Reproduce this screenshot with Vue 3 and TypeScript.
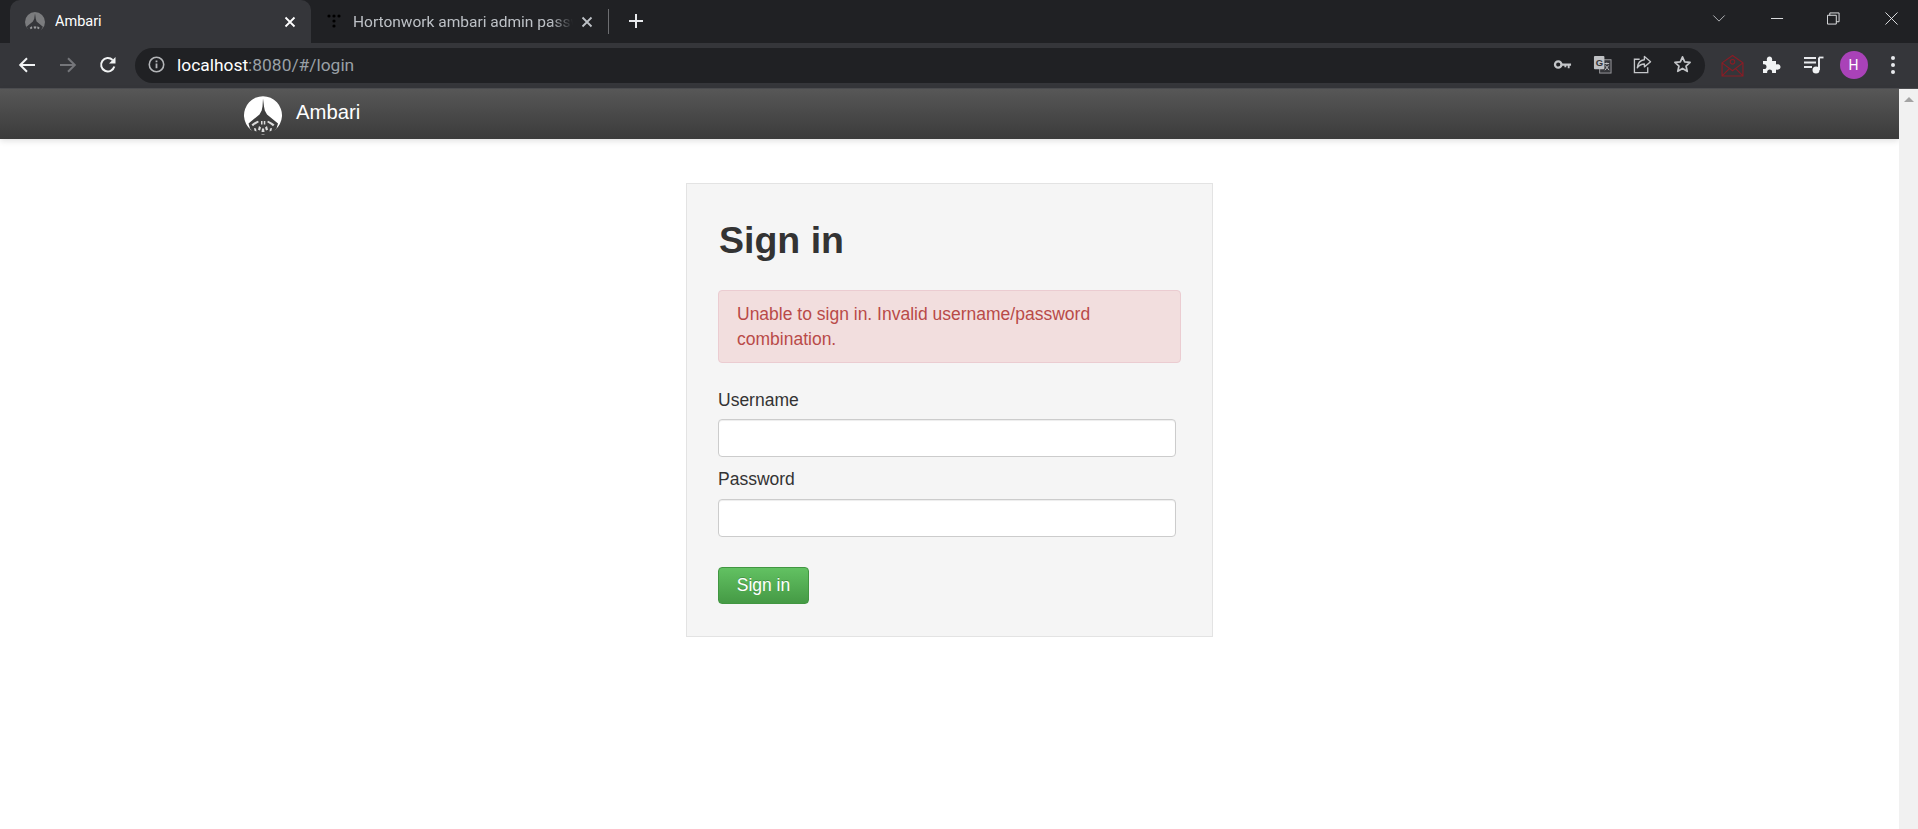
<script setup lang="ts">
import { ref } from 'vue'
const username = ref('')
const password = ref('')
</script>

<template>
  <div class="window">
    <header class="tabstrip">
      <div class="tab active">
        <svg class="favicon" viewBox="0 0 38 38">
          <circle cx="19" cy="19" r="19" fill="#7b7c7e" />
          <path d="M19 3l1.500 10 1.500 5 12 10-4 7-5 3H13l-6-3-4-7 12-10 2.500-5z" fill="#35363a" />
          <path d="M9 30l4-3 1 4-3 2zM16 28l3-1 3 1-2 4h-2zM24 27l4 3-2 3-3-2z" fill="#9a9b9d" />
        </svg>
        <span class="tab-title">Ambari</span>
        <svg class="tab-close" viewBox="0 0 12 12"><path d="M1.500 1.500l9 9M10.500 1.500l-9 9" stroke="#fff" stroke-width="1.800" /></svg>
      </div>
      <div class="tab inactive">
        <svg class="favicon small" viewBox="0 0 16 16" fill="#000">
          <circle cx="2" cy="2" r="1.600" /><circle cx="7" cy="2" r="1.600" /><circle cx="12" cy="2" r="1.600" />
          <circle cx="7" cy="7" r="1.600" /><circle cx="7" cy="12" r="1.600" />
        </svg>
        <span class="tab-title faded">Hortonwork ambari admin password</span>
        <svg class="tab-close" viewBox="0 0 12 12"><path d="M1.500 1.500l9 9M10.500 1.500l-9 9" stroke="#bdc1c6" stroke-width="1.800" /></svg>
      </div>
      <span class="tab-sep"></span>
      <svg class="newtab" viewBox="0 0 16 16"><path d="M8 1v14M1 8h14" stroke="#e8eaed" stroke-width="2" /></svg>
      <div class="window-controls">
        <svg viewBox="0 0 16 10" class="chev"><path d="M1.500 1.500L8 8l6.500-6.500" fill="none" stroke="#c4c6c9" stroke-width="1" /></svg>
        <svg viewBox="0 0 14 14" class="ctl"><path d="M0 7h13" stroke="#e8eaed" stroke-width="1" /></svg>
        <svg viewBox="0 0 14 14" class="ctl"><path d="M.5 3.500h9.500v9.500H.5zM3 3.500V1h10v9.500h-3" fill="none" stroke="#e8eaed" stroke-width="1" /></svg>
        <svg viewBox="0 0 14 14" class="ctl"><path d="M.5.500l13 13M13.500.500l-13 13" stroke="#e8eaed" stroke-width="1" /></svg>
      </div>
    </header>

    <div class="toolbar">
      <button class="nav-btn" aria-label="Back">
        <svg viewBox="0 0 18 18"><path d="M17 9H2.500M9 2.200L2.200 9 9 15.800" fill="none" stroke="#f1f3f4" stroke-width="2" /></svg>
      </button>
      <button class="nav-btn" aria-label="Forward">
        <svg viewBox="0 0 18 18"><path d="M1 9h14.500M9 2.200L15.800 9 9 15.800" fill="none" stroke="#75767a" stroke-width="2" /></svg>
      </button>
      <button class="nav-btn" aria-label="Reload">
        <svg viewBox="0 0 18 18"><path d="M15.300 10.500A6.700 6.700 0 1 1 13.600 4" fill="none" stroke="#f1f3f4" stroke-width="2" /><path d="M16.500 1v6.500H10z" fill="#f1f3f4" /></svg>
      </button>
      <div class="omnibox">
        <svg class="info" viewBox="0 0 16 16"><circle cx="8" cy="8" r="6.800" fill="none" stroke="#b4b6b9" stroke-width="1.500" /><path d="M8 7v4.500M8 4.200v1.600" stroke="#b4b6b9" stroke-width="1.700" /></svg>
        <span class="url"><span class="host">localhost</span>:8080/#/login</span>
        <div class="omni-icons">
          <svg viewBox="0 0 20 20"><circle cx="5.500" cy="10" r="3.400" fill="none" stroke="#c4c6c9" stroke-width="2.400" /><path d="M9 9h10v2.200h-1.500V14h-2v-2.800h-1.500V13h-2v-1.800H9z" fill="#c4c6c9" /></svg>
          <svg viewBox="0 0 20 20"><rect x="7" y="5" width="12" height="14" fill="#35363a" stroke="#9a9b9e" stroke-width="1" /><rect x="1" y="1" width="11" height="14" rx="1" fill="#bfc1c4" /><text x="3" y="12" class="glyph-g">G</text><path d="M12 9h5M14.500 8v2M12.500 16l4-5M13 11l4 5" stroke="#c4c6c9" stroke-width="1" fill="none" /></svg>
          <svg viewBox="0 0 20 20"><path d="M7 4.500H1.500V18.500H15.500V13" fill="none" stroke="#c4c6c9" stroke-width="1.400" /><path d="M12 1.500L18.500 7 12 12.500V9.500c-3.500 0-5.500 1-7.500 4 .5-5 3-8 7.500-8.500z" fill="none" stroke="#c4c6c9" stroke-width="1.400" stroke-linejoin="round" /></svg>
          <svg viewBox="0 0 20 20"><path d="M10 2l2.300 5.300 5.700.500-4.300 3.800 1.300 5.600L10 14.200 5 17.200l1.300-5.600L2 7.800l5.700-.500z" fill="none" stroke="#c4c6c9" stroke-width="1.800" stroke-linejoin="round" /></svg>
        </div>
      </div>
      <div class="ext-icons">
        <svg class="mail" viewBox="0 0 22 22"><path d="M1 8.500L11 1.500l10 7V21H1zM1 8.500l10 7.500 10-7.500M1 21l7.500-7.500M21 21l-7.500-7.500" fill="none" stroke="#8a1c25" stroke-width="1.100" /><circle cx="11" cy="7.500" r="2.200" fill="none" stroke="#8a1c25" stroke-width="1" /></svg>
        <svg viewBox="0 0 20 20"><path d="M2 6h4c-.8-3 .8-4.500 2.500-4.500S11.800 3 11 6h4v3.500c3-.8 4.500.8 4.500 2.500S18 15.300 15 14.500V18h-4c.5-2.500-.8-3.500-2.300-3.500S5.800 15.500 6.200 18H2v-4c2.500.5 3.500-.8 3.500-2.300S4.500 8.800 2 9.300z" fill="#f1f3f4" /></svg>
        <svg viewBox="0 0 20 20"><path d="M0 3h12M0 7.500h12M0 12h8" stroke="#e8eaed" stroke-width="1.800" /><path d="M15 2.500V15" stroke="#e8eaed" stroke-width="2" /><path d="M15 2.500h4.500" stroke="#e8eaed" stroke-width="1.800" /><circle cx="12" cy="15" r="3.500" fill="#f1f3f4" /></svg>
        <div class="avatar">H</div>
        <svg class="dots" viewBox="0 0 6 20" fill="#e8eaed"><circle cx="3" cy="3" r="2" /><circle cx="3" cy="10" r="2" /><circle cx="3" cy="17" r="2" /></svg>
      </div>
    </div>

    <div class="viewport">
      <main class="page">
        <nav class="navbar">
          <svg class="logo" viewBox="0 0 38 39">
            <path d="M7 34A19 19 0 1 1 31 34L19 39z" fill="#fff" />
            <path d="M19 2.500l1 8 .8 4 2.200 4 11 9-1.500 5-3.500 4-5 2H14.500l-5-2-3.500-4-1.500-5 11-9 2.200-4 .8-4z" fill="#3e3e3e" />
            <path d="M7.500 28.500c2.500-2 4.500-3 6.500-3.800l.8 1.500c-2 1-3.800 2.300-5.800 4zM30.500 28.500c-2.500-2-4.500-3-6.500-3.800l-.8 1.500c2 1 3.800 2.300 5.800 4zM17 25h1.500v3.500H17zM19.800 25h1.500v3.500h-1.500zM15 30l2 1.500-1 3-2-.8zM23 30l-2 1.500 1 3 2-.8zM18 32.500h2l.5 3.500h-3zM10 32l2 .5.500 3-2-.8zM28 32l-2 .5-.5 3 2-.8z" fill="#dcdcdc" />
          </svg>
          <span class="brand">Ambari</span>
        </nav>
        <section class="card">
          <h2 class="title">Sign in</h2>
          <div class="alert">Unable to sign in. Invalid username/password combination.</div>
          <form class="form" @submit.prevent>
            <label class="label" for="username">Username</label>
            <input id="username" v-model="username" class="input" type="text" />
            <label class="label second" for="password">Password</label>
            <input id="password" v-model="password" class="input" type="password" />
            <button class="submit" type="submit">Sign in</button>
          </form>
        </section>
      </main>
      <aside class="scrollbar"><span class="arrow"></span></aside>
    </div>
  </div>
</template>

<style>
html, body { margin: 0; overflow: hidden; background: #fff; }
</style>

<style scoped>
.window { width: 1918px; height: 829px; display: flex; flex-direction: column; overflow: hidden; font-family: "Liberation Sans", Arial, sans-serif; }

.tabstrip { height: 43px; flex: none; background: #202124; display: flex; align-items: stretch; padding-left: 10px; box-sizing: border-box; }
.tab { height: 43px; display: flex; align-items: center; box-sizing: border-box; font-family: Roboto, sans-serif; font-size: 14.500px; }
.active { width: 301px; background: #35363a; border-radius: 10px 10px 0 0; padding: 0 15px 0 15px; color: #fff; }
.inactive { width: 297px; padding: 0 15px 0 16px; color: #bdc1c6; font-size: 15.500px; }
.favicon { width: 20px; height: 20px; flex: none; margin-right: 10px; }
.favicon.small { width: 16px; height: 16px; margin: 0 10px 0 0; }
.tab-title { flex: 1; white-space: nowrap; overflow: hidden; }
.faded { -webkit-mask-image: linear-gradient(90deg, #000 90%, transparent 100%); mask-image: linear-gradient(90deg, #000 90%, transparent 100%); }
.tab-close { width: 12px; height: 12px; flex: none; margin-left: 8px; }
.tab-sep { width: 1px; height: 25px; background: #6d6e71; margin: 9px 0 0 0; }
.newtab { width: 16px; height: 16px; margin: 13px 0 0 19px; }
.window-controls { margin-left: auto; display: flex; align-items: center; padding: 0 20px 6px 0; gap: 44px; }
.chev { width: 14px; height: 9px; margin-right: 1px; }
.ctl { width: 13px; height: 13px; }
.ctl:nth-child(3) { margin-left: -1px; margin-right: 1px; }

.toolbar { height: 46px; flex: none; box-sizing: border-box; background: #35363a; border-bottom: 1px solid #4d4e51; display: flex; align-items: center; padding: 0 0 1px 7px; }
.nav-btn { width: 40.500px; height: 36px; padding: 0; border: 0; background: none; display: flex; align-items: center; justify-content: center; }
.nav-btn svg { width: 18px; height: 18px; }
.omnibox { width: 1570px; height: 35px; margin-left: 6.500px; background: #202124; border-radius: 18px; display: flex; align-items: center; box-sizing: border-box; padding: 0 13px 1px 13px; }
.info { width: 17px; height: 17px; flex: none; }
.url { margin-left: 12px; font-family: Roboto, sans-serif; font-size: 17.400px; color: #9aa0a6; }
.host { color: #fff; }
.omni-icons { margin-left: auto; display: flex; align-items: center; gap: 21px; }
.omni-icons svg { width: 19px; height: 19px; }
.glyph-g { font-family: "Liberation Sans", sans-serif; font-size: 10px; font-weight: 700; fill: #35363a; }
.ext-icons { display: flex; align-items: center; margin-left: 16px; }
.ext-icons svg { width: 20px; height: 20px; }
.ext-icons .mail { width: 23px; height: 23px; margin-right: 17px; }
.ext-icons svg:nth-child(2) { margin-right: 23px; }
.ext-icons .dots { width: 6px; height: 20px; margin-left: 22.500px; }
.avatar { width: 28px; height: 28px; border-radius: 50%; background: #a942b8; color: #fff; font-family: Roboto, sans-serif; font-size: 14px; display: flex; align-items: center; justify-content: center; margin-left: 15.500px; }

.viewport { flex: 1; display: flex; min-height: 0; }
.page { flex: 1; min-width: 0; background: #fff; }
.scrollbar { width: 19px; flex: none; background: #f1f1f1; display: flex; justify-content: center; padding-top: 8px; box-sizing: border-box; }
.arrow { width: 0; height: 0; border-left: 5px solid transparent; border-right: 5px solid transparent; border-bottom: 5px solid #a3a3a3; }

.navbar { height: 50px; background: linear-gradient(#575757, #3b3b3b); box-shadow: 0 2px 6px rgba(0, 0, 0, .12); display: flex; align-items: center; padding-left: 244px; box-sizing: border-box; }
.logo { width: 38px; height: 39px; flex: none; margin-top: 3px; }
.brand { margin-left: 14px; color: #fff; font-size: 20.300px; margin-bottom: 4px; }

.card { width: 527px; margin: 44px auto 0; box-sizing: border-box; height: 454px; background: #f5f5f5; border: 1px solid #e3e3e3; padding: 36px 31px 0; color: #333; }
.title { margin: 0 0 29px 1px; font-size: 37.500px; line-height: 41px; font-weight: 700; }
.alert { height: 73px; box-sizing: border-box; padding: 11px 18px; background: #f2dede; border: 1px solid #ebccd1; border-radius: 4px; color: #b94a48; font-size: 17.500px; line-height: 25px; }
.form { display: block; margin-top: 25px; }
.label { display: block; font-size: 17.500px; line-height: 25px; margin-bottom: 6px; }
.label.second { margin-top: 10px; margin-bottom: 7px; }
.input { display: block; width: 458px; height: 38px; box-sizing: border-box; border: 1px solid #ccc; border-radius: 4px; background: #fff; box-shadow: inset 0 1px 1px rgba(0, 0, 0, .075); }
.submit { display: block; margin-top: 30px; width: 91px; height: 37px; padding: 0; border: 1px solid #419641; border-radius: 4px; background: linear-gradient(#62c162, #459a45); color: #fff; font-family: inherit; font-size: 17.500px; text-shadow: 0 -1px 0 rgba(0, 0, 0, .2); }
</style>
